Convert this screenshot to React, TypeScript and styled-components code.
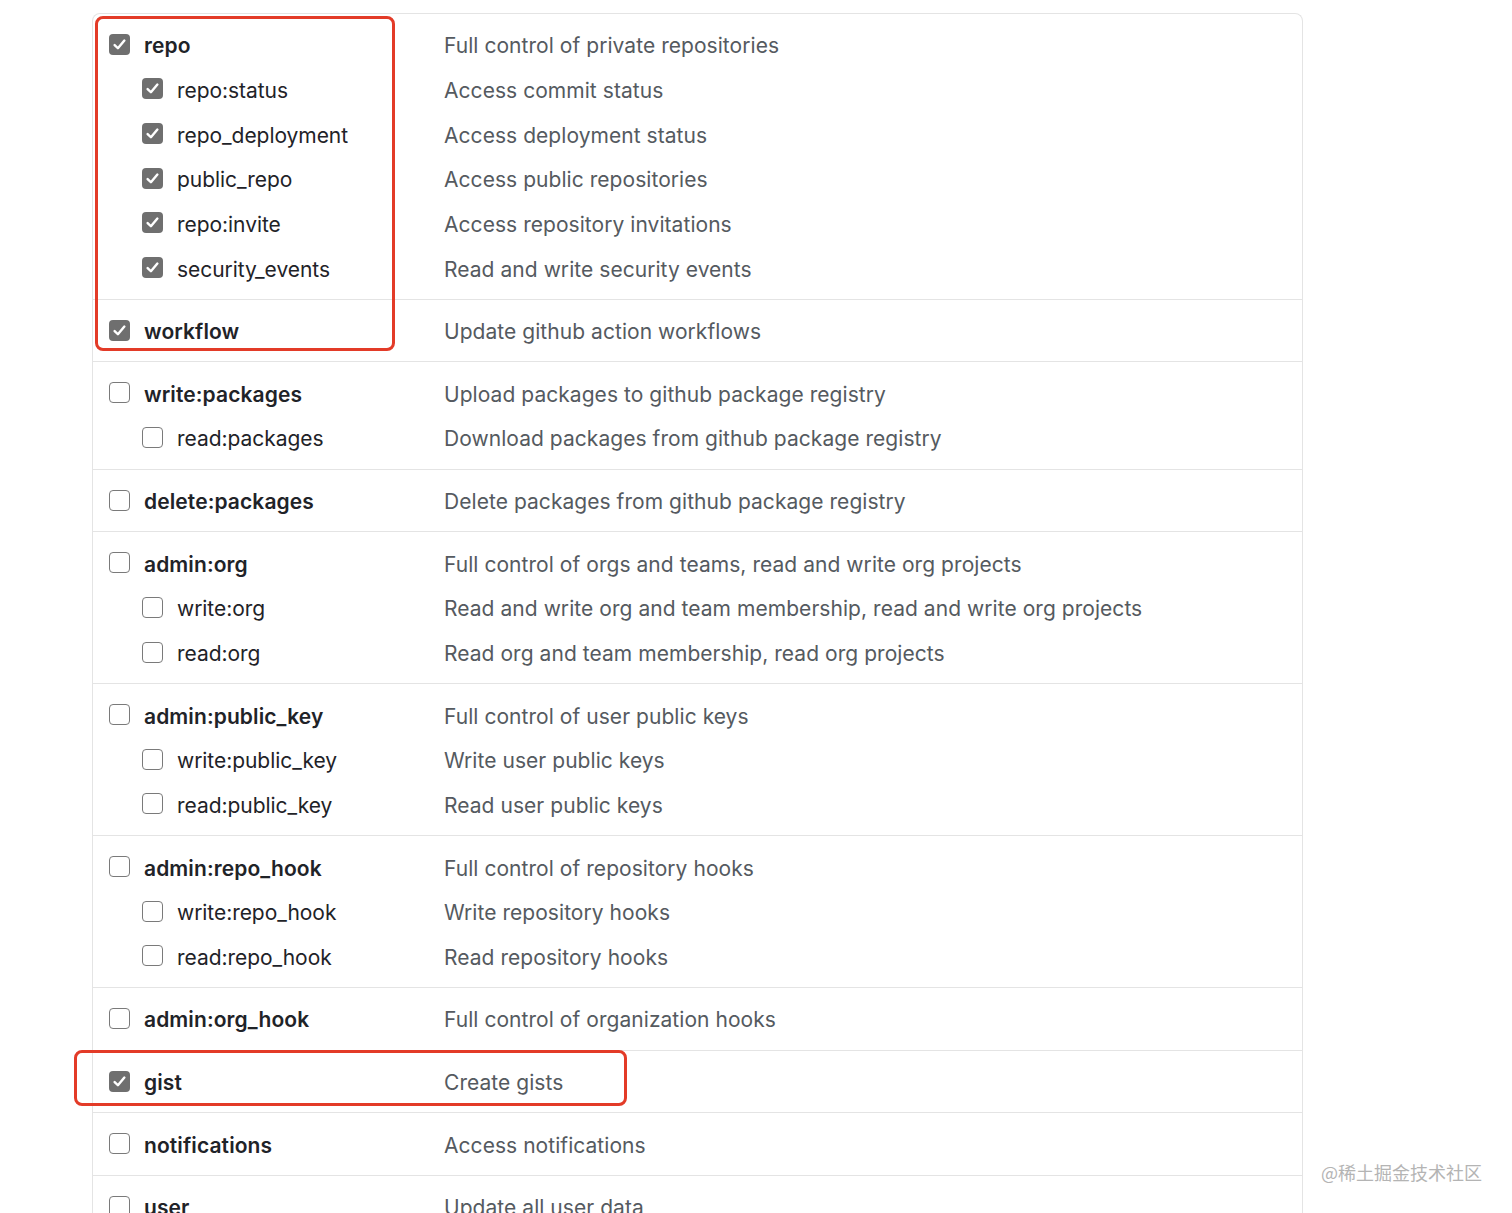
import React from 'react'
import styled, { createGlobalStyle } from 'styled-components'

const GlobalStyle = createGlobalStyle`
  html, body {
    margin: 0;
    padding: 0;
    background: #ffffff;
  }
  body {
    font-family: Inter, "Noto Sans", "Liberation Sans", sans-serif;
    -webkit-font-smoothing: antialiased;
  }
`

interface Scope {
  name: string
  description: string
  checked: boolean
}

interface ScopeGroup {
  parent: Scope
  children: Scope[]
}

const groups: ScopeGroup[] = [
  {
    parent: { name: 'repo', description: 'Full control of private repositories', checked: true },
    children: [
      { name: 'repo:status', description: 'Access commit status', checked: true },
      { name: 'repo_deployment', description: 'Access deployment status', checked: true },
      { name: 'public_repo', description: 'Access public repositories', checked: true },
      { name: 'repo:invite', description: 'Access repository invitations', checked: true },
      { name: 'security_events', description: 'Read and write security events', checked: true },
    ],
  },
  {
    parent: { name: 'workflow', description: 'Update github action workflows', checked: true },
    children: [],
  },
  {
    parent: { name: 'write:packages', description: 'Upload packages to github package registry', checked: false },
    children: [
      { name: 'read:packages', description: 'Download packages from github package registry', checked: false },
    ],
  },
  {
    parent: { name: 'delete:packages', description: 'Delete packages from github package registry', checked: false },
    children: [],
  },
  {
    parent: { name: 'admin:org', description: 'Full control of orgs and teams, read and write org projects', checked: false },
    children: [
      { name: 'write:org', description: 'Read and write org and team membership, read and write org projects', checked: false },
      { name: 'read:org', description: 'Read org and team membership, read org projects', checked: false },
    ],
  },
  {
    parent: { name: 'admin:public_key', description: 'Full control of user public keys', checked: false },
    children: [
      { name: 'write:public_key', description: 'Write user public keys', checked: false },
      { name: 'read:public_key', description: 'Read user public keys', checked: false },
    ],
  },
  {
    parent: { name: 'admin:repo_hook', description: 'Full control of repository hooks', checked: false },
    children: [
      { name: 'write:repo_hook', description: 'Write repository hooks', checked: false },
      { name: 'read:repo_hook', description: 'Read repository hooks', checked: false },
    ],
  },
  {
    parent: { name: 'admin:org_hook', description: 'Full control of organization hooks', checked: false },
    children: [],
  },
  {
    parent: { name: 'gist', description: 'Create gists', checked: true },
    children: [],
  },
  {
    parent: { name: 'notifications', description: 'Access notifications', checked: false },
    children: [],
  },
  {
    parent: { name: 'user', description: 'Update all user data', checked: false },
    children: [],
  },
]

const Page = styled.div`
  position: relative;
  height: 1213px;
  overflow: hidden;
  padding: 13px 0 0 92px;
  box-sizing: border-box;
`

const ScopeTable = styled.div`
  width: 1211px;
  border: 1px solid #e4e4e4;
  border-bottom: none;
  border-radius: 8px 8px 0 0;
  box-sizing: border-box;
`

const Group = styled.div<{ $first?: boolean }>`
  padding: 9.5px 0 7.5px;
  border-top: ${p => (p.$first ? 'none' : '1px solid #e4e4e4')};
`

const Row = styled.label`
  display: grid;
  grid-template-columns: 335px 1fr;
  align-items: center;
  height: 44.65px;
  padding-left: 16px;
`

const LabelCell = styled.div<{ $child?: boolean }>`
  display: flex;
  align-items: center;
  gap: 14px;
  padding-left: ${p => (p.$child ? '33px' : '0')};
`

const Box = styled.span<{ $checked: boolean }>`
  display: inline-flex;
  align-items: center;
  justify-content: center;
  width: 21px;
  height: 21px;
  margin-top: -3px;
  box-sizing: border-box;
  border-radius: 4px;
  background: ${p => (p.$checked ? '#6f6f6f' : '#ffffff')};
  border: ${p => (p.$checked ? 'none' : '1.5px solid #7a7a7a')};
  flex-shrink: 0;
`

const Name = styled.span<{ $child?: boolean }>`
  font-size: 21px;
  font-weight: ${p => (p.$child ? 400 : 600)};
  color: #1f2328;
  letter-spacing: ${p => (p.$child ? '-0.05px' : '0.1px')};
`

const Description = styled.span`
  font-size: 21px;
  color: #555a60;
  letter-spacing: 0.05px;
  white-space: nowrap;
`

const Highlight = styled.div`
  position: absolute;
  border: 3.5px solid #e33b28;
  border-radius: 8px;
  box-sizing: border-box;
  pointer-events: none;
`

const Watermark = styled.div`
  position: absolute;
  left: 1321px;
  top: 1159px;
  font-family: "Noto Sans CJK SC", "Noto Sans", sans-serif;
  font-size: 18px;
  color: #b4b4b4;
  white-space: nowrap;
`

const Checkbox: React.FC<{ checked: boolean }> = ({ checked }) => (
  <Box $checked={checked}>
    {checked && (
      <svg width="15" height="15" viewBox="0 0 16 16" fill="none">
        <path d="M2.8 8.6 L6.3 12 L13.2 3.8" stroke="#ffffff" strokeWidth="2.6" strokeLinecap="round" strokeLinejoin="round" />
      </svg>
    )}
  </Box>
)

const ScopeRow: React.FC<{ scope: Scope; child?: boolean }> = ({ scope, child }) => (
  <Row>
    <LabelCell $child={child}>
      <Checkbox checked={scope.checked} />
      <Name $child={child}>{scope.name}</Name>
    </LabelCell>
    <Description>{scope.description}</Description>
  </Row>
)

export default function App() {
  return (
    <>
      <GlobalStyle />
      <Page>
        <ScopeTable>
          {groups.map((g, i) => (
            <Group key={g.parent.name} $first={i === 0}>
              <ScopeRow scope={g.parent} />
              {g.children.map(c => (
                <ScopeRow key={c.name} scope={c} child />
              ))}
            </Group>
          ))}
        </ScopeTable>
        <Highlight style={{ left: 95, top: 16, width: 300, height: 335 }} />
        <Highlight style={{ left: 74, top: 1050, width: 553, height: 56 }} />
        <Watermark>@稀土掘金技术社区</Watermark>
      </Page>
    </>
  )
}
